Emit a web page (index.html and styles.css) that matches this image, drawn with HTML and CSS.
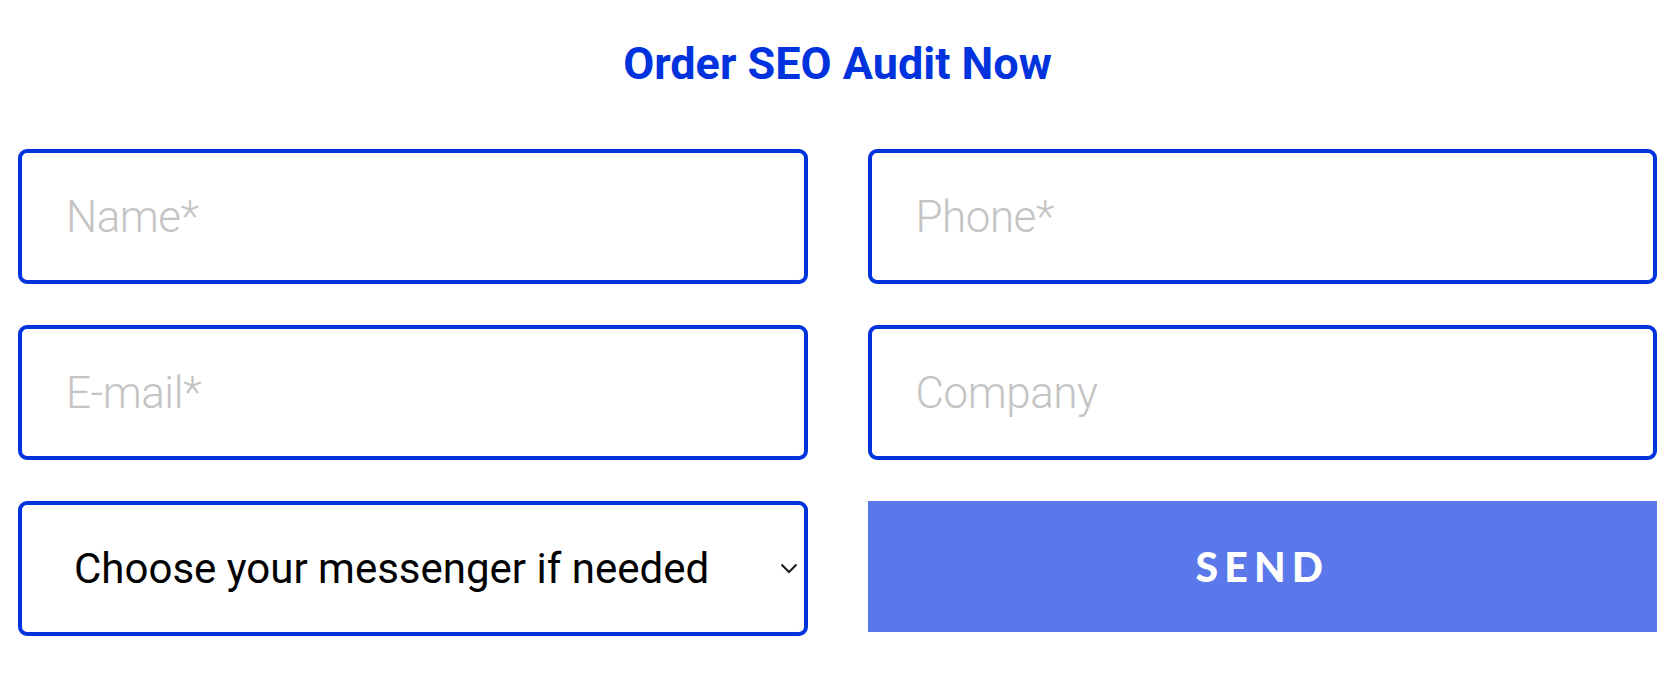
FILE: index.html
```html
<!DOCTYPE html>
<html lang="en">
<head>
  <meta charset="UTF-8" />
  <meta name="viewport" content="width=device-width, initial-scale=1" />
  <title>Order SEO Audit Now</title>
  <link rel="stylesheet" href="styles.css">
</head>
<body>

  <section class="audit">
    <h2 class="audit-title">Order SEO Audit Now</h2>

    <form class="audit-form" method="POST" action="/audit">
      <input class="field" type="text" name="name" placeholder="Name*" required>
      <input class="field" type="tel" name="phone" placeholder="Phone*" required>
      <input class="field" type="email" name="email" placeholder="E-mail*" required>
      <input class="field" type="text" name="company" placeholder="Company">

      <div class="select-wrapper">
        <select class="field field-select" name="messenger">
          <option value="">Choose your messenger if needed</option>
          <option value="telegram">Telegram</option>
          <option value="whatsapp">WhatsApp</option>
          <option value="viber">Viber</option>
          <option value="skype">Skype</option>
        </select>
        <svg class="select-arrow" width="18" height="11" viewBox="0 0 18 11" aria-hidden="true">
          <polyline points="1.5,1.5 9,9 16.5,1.5" fill="none" stroke="#1a1a1a" stroke-width="2"/>
        </svg>
      </div>

      <button type="submit" class="send">SEND</button>
    </form>
  </section>

</body>
</html>
```

FILE: styles.css
```css
body {
  margin: 0;
  padding: 0;
  background: #fff;
  font-family: 'Roboto', 'Liberation Sans', sans-serif;
}

.audit {
  padding: 0 23px 0 18px;
}

.audit-title {
  margin: 0;
  padding-top: 37px;
  height: 149px;
  box-sizing: border-box;
  text-align: center;
  font-size: 45px;
  font-weight: 700;
  line-height: 54px;
  color: #0033dd;
}

.audit-form {
  display: grid;
  grid-template-columns: 1fr 1fr;
  column-gap: 60px;
  row-gap: 41px;
}

.field {
  display: block;
  width: 100%;
  height: 135px;
  box-sizing: border-box;
  border: 4px solid #0033dd;
  border-radius: 9px;
  padding: 0 44px;
  background: #fff;
  font-family: 'Roboto', 'Liberation Sans', sans-serif;
  font-size: 44px;
  font-weight: 300;
  letter-spacing: -0.5px;
  color: #111;
  outline: none;
}

.field::placeholder {
  color: #c4c4c4;
  opacity: 1;
}

.select-wrapper {
  position: relative;
}

.field-select {
  appearance: none;
  -webkit-appearance: none;
  padding: 0 60px 0 52px;
  font-weight: 400;
  font-size: 42px;
  letter-spacing: 0;
  color: #000;
  cursor: pointer;
}

.select-arrow {
  position: absolute;
  top: 62px;
  right: 10px;
  pointer-events: none;
}

.send {
  height: 131px;
  border: none;
  background-color: #5a78ea;
  color: #fff;
  font-family: 'Lato', 'Roboto', sans-serif;
  font-size: 41px;
  font-weight: 900;
  letter-spacing: 0.15em;
  padding-left: 0.15em;
  cursor: pointer;
}

.send:hover {
  background-color: #4c6be3;
}
```
